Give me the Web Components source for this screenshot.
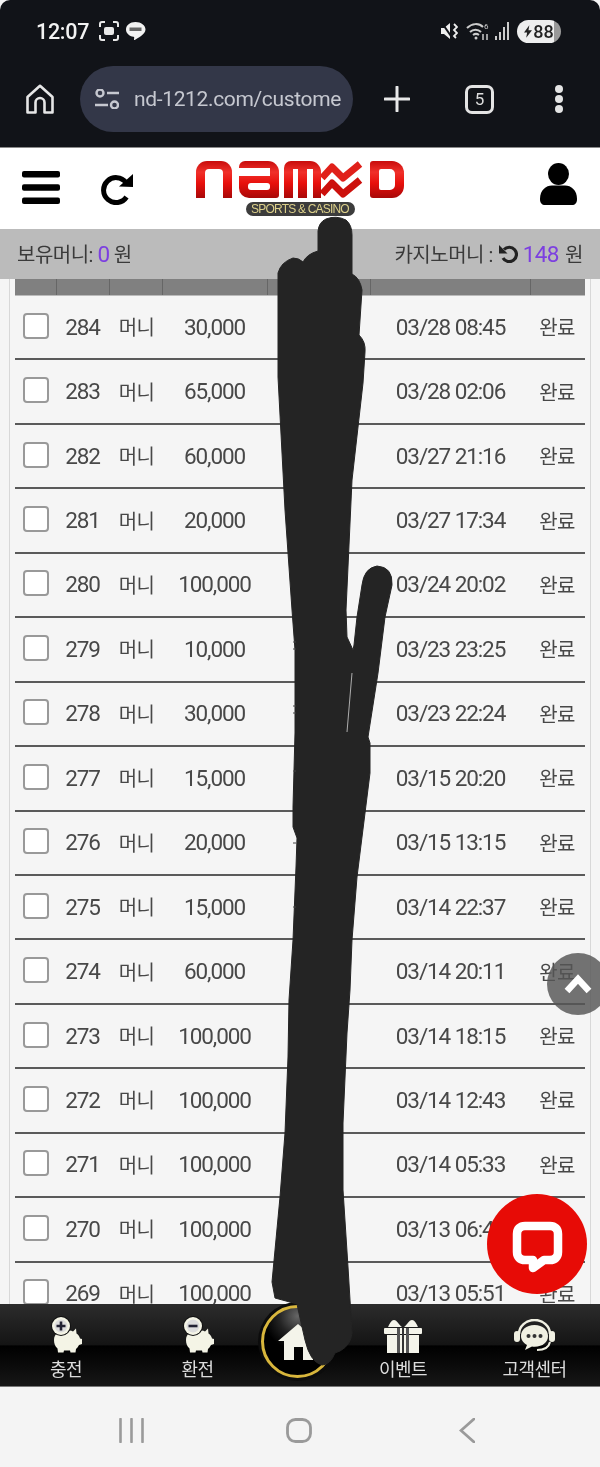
<!DOCTYPE html>
<html lang="ko">
<head>
<meta charset="utf-8">
<title>nd-1212.com/customer</title>
<style>
  html, body { margin: 0; padding: 0; background: #f4f4f4; }
  body {
    position: relative;
    width: 600px;
    height: 1467px;
    overflow: hidden;
    display: flex;
    flex-direction: column;
    font-family: Roboto, "Noto Sans CJK KR", sans-serif;
  }
  body > * { filter: blur(.4px); }
  history-list { flex: 1; min-height: 0; }
</style>
</head>
<body>
<browser-bar></browser-bar>
<site-header></site-header>
<money-bar></money-bar>
<history-list>
  <history-row no="284" amount="30,000" date="03/28 08:45"></history-row>
  <history-row no="283" amount="65,000" date="03/28 02:06"></history-row>
  <history-row no="282" amount="60,000" date="03/27 21:16"></history-row>
  <history-row no="281" amount="20,000" date="03/27 17:34"></history-row>
  <history-row no="280" amount="100,000" date="03/24 20:02"></history-row>
  <history-row no="279" amount="10,000" date="03/23 23:25"></history-row>
  <history-row no="278" amount="30,000" date="03/23 22:24"></history-row>
  <history-row no="277" amount="15,000" date="03/15 20:20"></history-row>
  <history-row no="276" amount="20,000" date="03/15 13:15"></history-row>
  <history-row no="275" amount="15,000" date="03/14 22:37"></history-row>
  <history-row no="274" amount="60,000" date="03/14 20:11"></history-row>
  <history-row no="273" amount="100,000" date="03/14 18:15"></history-row>
  <history-row no="272" amount="100,000" date="03/14 12:43"></history-row>
  <history-row no="271" amount="100,000" date="03/14 05:33"></history-row>
  <history-row no="270" amount="100,000" date="03/13 06:45"></history-row>
  <history-row no="269" amount="100,000" date="03/13 05:51"></history-row>
</history-list>
<bottom-nav></bottom-nav>
<system-nav></system-nav>
<float-buttons></float-buttons>
<ink-overlay></ink-overlay>

<script>
class BrowserBar extends HTMLElement {
    constructor() {
        super();
        this.attachShadow({ mode: 'open' });
        this.shadowRoot.innerHTML = `
        <style>
        :host {
          display: block;
          height: 147px;
          background: #111318;
          border-bottom: 1px solid #8a8a8a;
          border-radius: 10px 10px 0 0;
          color: #eee;
          font-family: Roboto, sans-serif;
        }
        .status {
          height: 66px;
          display: flex;
          align-items: center;
          padding: 0 39px 4px 36px;
          box-sizing: border-box;
        }
        .time { font-size: 21.5px; font-weight: 500; letter-spacing: -.3px; color: #f2f2f2; margin-right: 10px; }
        .status svg { display: block; }
        .spacer { flex: 1; }
        .battery {
          width: 44px;
          height: 23px;
          border-radius: 12px;
          background: linear-gradient(90deg, #eee 85%, #999 85%);
          color: #222;
          font-size: 18px;
          font-weight: 500;
          display: flex;
          align-items: center;
          justify-content: center;
          gap: 1px;
          margin-left: 6px;
        }
        .tools {
          height: 66px;
          display: flex;
          align-items: center;
          position: relative;
        }
        .home { margin-left: 26px; width: 28px; height: 30px; }
        .pill {
          margin-left: 26px;
          width: 273px;
          height: 66px;
          border-radius: 33px;
          background: #333748;
          display: flex;
          align-items: center;
          box-sizing: border-box;
          padding-left: 15px;
          color: #c6c8d0;
          font-size: 21px;
          white-space: nowrap;
          overflow: hidden;
        }
        .pill svg { flex: none; }
        .pill span { margin-left: 15px; letter-spacing: -.35px; }
        .plus { margin-left: 31px; }
        .tabs {
          margin-left: 55px;
          width: 23px;
          height: 23px;
          border: 3px solid #e4e4e4;
          border-radius: 7px;
          display: flex;
          align-items: center;
          justify-content: center;
          font-size: 17px;
          color: #ddd;
        }
        .more { margin-left: 60px; }
        </style>
        <div class="status">
          <span class="time">12:07</span>
          <svg width="20" height="20" viewBox="0 0 20 20" fill="none" stroke="#e8e8e8" stroke-width="2">
            <path d="M1 6V3a2 2 0 0 1 2-2h3M14 1h3a2 2 0 0 1 2 2v3M19 14v3a2 2 0 0 1-2 2h-3M6 19H3a2 2 0 0 1-2-2v-3"/>
            <rect x="5" y="6" width="10" height="8" rx="2" fill="#e8e8e8" stroke="none"/>
          </svg>
          <svg width="21" height="20" viewBox="0 0 21 20" style="margin-left:6px">
            <path d="M10.5 1C5 1 1 4.3 1 8.5c0 3.800 3.300 6.700 7.500 7.300.6.100.8.400.7 1l-.2 1.700c0 .5.300.7.800.4 2.500-1.400 10.700-5.700 10.700-10.400C20.500 4.300 16 1 10.500 1z" fill="#f2f2f2"/>
            <rect x="4.500" y="6.500" width="12" height="3.500" fill="#666"/>
          </svg>
          <span class="spacer"></span>
          <svg width="17" height="20" viewBox="0 0 17 20" fill="#eee">
            <path d="M0 7h3l6-5v16l-6-5H0z"/>
            <path d="M1 2l11 16" stroke="#111318" stroke-width="2"/>
            <path d="M13 3l3 3-3 3 3 3-3 3 2 2" fill="none" stroke="#eee" stroke-width="1.800"/>
          </svg>
          <svg width="24" height="22" viewBox="0 0 24 22" fill="none" stroke="#ccc" stroke-width="2" style="margin-left:8px">
            <path d="M1 8c5-5 12-5 16-1M4 12c3-3 8-3 11 0M7 15c2-1.500 4-1.500 6 0"/>
            <circle cx="10" cy="18" r="1.500" fill="#ccc" stroke="none"/>
            <path d="M17 14v6M21 20v-6" stroke-width="1.500"/>
            <text x="18" y="9" font-size="8" fill="#ccc" stroke="none" font-family="Roboto, sans-serif">6</text>
          </svg>
          <svg width="16" height="20" viewBox="0 0 16 20" fill="#ccc" style="margin-left:5px">
            <rect x="0" y="15" width="2" height="4"/><rect x="4" y="11" width="2" height="8"/><rect x="8" y="6" width="2" height="13"/><rect x="12" y="1" width="2" height="18"/>
          </svg>
          <span class="battery">
            <svg width="8" height="13" viewBox="0 0 9 14" fill="#222"><path d="M6 0L0 8h3.500L2.500 14 9 5.500H5z"/></svg>88
          </span>
        </div>
        <div class="tools">
          <svg class="home" viewBox="0 0 28 30" fill="none" stroke="#e6e6e6" stroke-width="2.600" stroke-linejoin="round">
            <path d="M1.500 13L14 1.800 26.500 13v15.500H18.500V18.500a4.500 4.500 0 0 0-9 0V28.500H1.500z"/>
          </svg>
          <div class="pill">
            <svg width="24" height="20" viewBox="0 0 24 20" fill="none" stroke="#c6c8d0" stroke-width="2.400">
              <circle cx="5" cy="4" r="3.500"/><path d="M12 4h12M0 16h13"/><circle cx="19.500" cy="16" r="3.500"/>
            </svg>
            <span>nd-1212.com/custome</span>
          </div>
          <svg class="plus" width="26" height="26" viewBox="0 0 26 26" stroke="#e8e8e8" stroke-width="3" stroke-linecap="round"><path d="M13 1v24M1 13h24"/></svg>
          <div class="tabs">5</div>
          <svg class="more" width="10" height="30" viewBox="0 0 10 30" fill="#e4e4e4"><circle cx="5" cy="5" r="4"/><circle cx="5" cy="15" r="4"/><circle cx="5" cy="25" r="4"/></svg>
        </div>
        `;
    }
}

class SiteHeader extends HTMLElement {
    constructor() {
        super();
        this.attachShadow({ mode: 'open' });
        this.shadowRoot.innerHTML = `
        <style>
        :host {
          display: block;
          height: 81px;
          background: #fff;
          position: relative;
        }
        .row {
          height: 100%;
          display: flex;
          align-items: flex-start;
        }
        .burger { margin: 23px 0 0 22px; }
        .reload { margin: 25px 0 0 40px; }
        .logo { margin: 13px 0 0 62px; width: 208px; display: flex; flex-direction: column; align-items: center; }
        .user { margin: 15px 0 0 136px; }
        .word { display: flex; height: 37px; width: 208px; }
        .red { background: linear-gradient(180deg, #c80c0c 0%, #f0302a 30%, #e8100c 60%, #a80808 100%); position: relative; flex: none; }
        .red i { position: absolute; background: #fff; display: block; }
        .n { width: 36px; height: 37px; border-radius: 11px 11px 0 0; }
        .n i { left: 9px; right: 9px; top: 8px; bottom: 0; border-radius: 4px 4px 0 0; }
        .a { width: 40px; height: 37px; margin-left: 7px; border-radius: 6px 11px 3px 10px; }
        .a .gap { left: 0; right: 9px; top: 7px; height: 8px; }
        .a .hole { left: 9px; right: 9px; top: 22px; height: 7px; border-radius: 3px; }
        .m { width: 37px; height: 37px; margin-left: 5px; border-radius: 7px 11px 0 0; }
        .m .l { left: 8.500px; width: 5.500px; top: 8px; bottom: 0; }
        .m .r { right: 8.500px; width: 5.500px; top: 8px; bottom: 0; }
        .zig { width: 42px; height: 37px; display: block; flex: none; }
        .d { width: 34px; height: 37px; margin-left: 7px; border-radius: 3px 12px 12px 3px; }
        .d i { left: 9px; right: 9px; top: 8px; bottom: 8px; border-radius: 2px 5px 5px 2px; }
        .badge {
          margin-top: 4px;
          height: 14px;
          width: 109px;
          border-radius: 7px;
          background: #3c3c3c;
          color: #dcd08a;
          font: 12px/14px "Liberation Sans", sans-serif;
          letter-spacing: -.8px;
          text-align: center;
          white-space: nowrap;
        }
        </style>
        <div class="row">
          <svg class="burger" width="38" height="33" viewBox="0 0 38 33" fill="#000">
            <rect width="38" height="6.500" rx="2"/><rect y="13.300" width="38" height="6.500" rx="2"/><rect y="26.500" width="38" height="6.500" rx="2"/>
          </svg>
          <svg class="reload" width="34" height="32" viewBox="0 0 34 32" fill="none">
            <path d="M26 9.500A12.500 12.500 0 1 0 26.500 24" stroke="#000" stroke-width="5"/>
            <path d="M19 13.500L33 14 33 1z" fill="#000"/>
          </svg>
          <div class="logo">
            <div class="word" role="img" aria-label="NAMED">
              <div class="red n"><i></i></div>
              <div class="red a"><i class="gap"></i><i class="hole"></i></div>
              <div class="red m"><i class="l"></i><i class="r"></i></div>
              <svg class="zig" viewBox="0 0 42 37" fill="none" stroke-width="7" stroke-linejoin="round">
                <path d="M1 17L11 6l11 11L39 3" stroke="#e0201a"/>
                <path d="M1 33l10-11 11 11 17-14" stroke="#cc100c"/>
              </svg>
              <div class="red d"><i></i></div>
            </div>
            <div class="badge">SPORTS &amp; CASINO</div>
          </div>
          <svg class="user" width="37" height="42" viewBox="0 0 37 42" fill="#000">
            <ellipse cx="18.500" cy="11" rx="10.500" ry="11"/>
            <path d="M0 36c0-9 6-13.500 12-13.500h13C31 22.500 37 27 37 36c0 4-2 6-5 6H5c-3 0-5-2-5-6z"/>
          </svg>
        </div>
        `;
    }
}

class MoneyBar extends HTMLElement {
    constructor() {
        super();
        this.attachShadow({ mode: 'open' });
        this.shadowRoot.innerHTML = `
        <style>
        :host {
          display: flex;
          align-items: center;
          justify-content: space-between;
          height: 50px;
          padding: 0 17px 2px;
          box-sizing: border-box;
          background: #bbb;
          color: #3a3a3a;
          font: 20px Roboto, "Noto Sans CJK KR", sans-serif;
          letter-spacing: -.5px;
        }
        b { font-weight: 400; color: #7c3fe0; font-size: 22.500px; letter-spacing: -.7px; }
        .right { display: flex; align-items: center; gap: 5px; }
        .right b { margin: 0 2px 0 0; }
        svg { display: block; }
        </style>
        <div>보유머니: <b>0</b> 원</div>
        <div class="right">
          <span>카지노머니 :</span>
          <svg width="20" height="19" viewBox="0 0 20 19" fill="none">
            <path d="M6 5.500A7.200 7.200 0 1 1 5 14" stroke="#222" stroke-width="3.200"/>
            <path d="M1 1v8.500h8.500z" fill="#222"/>
          </svg>
          <span><b>148</b> 원</span>
        </div>
        `;
    }
}

class HistoryList extends HTMLElement {
    constructor() {
        super();
        this.attachShadow({ mode: 'open' });
        this.shadowRoot.innerHTML = `
        <style>
        :host {
          display: block;
          overflow: hidden;
          background: #f5f5f5;
        }
        .box {
          margin: 0 9px;
          padding: 0 5px;
          border-left: 1px solid #d8d8d8;
          border-right: 1px solid #d8d8d8;
          min-height: 100%;
        }
        .head {
          height: 16px;
          display: grid;
          grid-template-columns: 42px 53px 53px 105px 103px 160px 1fr;
          background: #808080;
          border-bottom: 1px solid #bbb;
        }
        .head i { border-right: 1px solid #666; }
        .head i:last-child { border: 0; }
        </style>
        <div class="box">
          <div class="head"><i></i><i></i><i></i><i></i><i></i><i></i><i></i></div>
          <slot></slot>
        </div>
        `;
    }
}

class HistoryRow extends HTMLElement {
    constructor() {
        super();
        this.attachShadow({ mode: 'open' });
    }

    connectedCallback() {
        this.shadowRoot.innerHTML = `
        <style>
        :host {
          display: grid;
          grid-template-columns: 42px 53px 53px 105px 103px 160px 1fr;
          align-items: center;
          justify-items: center;
          height: 64.450px;
          box-sizing: border-box;
          border-bottom: 2px solid #5a5a5a;
          padding-bottom: 3px;
          color: #484848;
          font: 22.500px Roboto, "Noto Sans CJK KR", sans-serif;
          letter-spacing: -1.100px;
        }
        .check {
          width: 26px;
          height: 26px;
          box-sizing: border-box;
          background: #fff;
          border: 2px solid #999;
          border-radius: 4px;
        }
        .num, .date, .ko { padding-top: 2px; }
        .num { margin-right: 2px; }
        .date { margin-right: 1px; }
        .ko { font-size: 20px; letter-spacing: -.6px; }
        .done { margin-right: 2px; }
        </style>
        <div class="check"></div>
        <div class="num">${this.getAttribute('no')}</div>
        <div class="ko">머니</div>
        <div class="num">${this.getAttribute('amount')}</div>
        <div></div>
        <div class="date">${this.getAttribute('date')}</div>
        <div class="ko done">완료</div>
        `;
    }
}

class NavItem extends HTMLElement {
    constructor() {
        super();
        this.attachShadow({ mode: 'open' });
        this.shadowRoot.innerHTML = `
        <style>
        :host {
          display: flex;
          flex-direction: column;
          align-items: center;
          color: #ddd;
          font: 18px "Noto Sans CJK KR", sans-serif;
          letter-spacing: -.6px;
          padding-top: 13px;
        }
        .icon { height: 36px; display: flex; align-items: flex-end; }
        .label { line-height: 24px; margin-top: 3px; white-space: nowrap; }
        </style>
        <div class="icon"><slot name="icon"></slot></div>
        <div class="label"><slot></slot></div>
        `;
    }
}

class BottomNav extends HTMLElement {
    constructor() {
        super();
        this.attachShadow({ mode: 'open' });
        const pig = (mark) => `
          <svg slot="icon" width="32" height="37" viewBox="0 0 32 37" fill="#f4f4e6">
            <path d="M4 24c0-6 5-10 12-10 3 0 5 .5 7 1.500l3-3 .5 5c2 1 3 3 3.500 5l2 .5v5l-3 1c-1 2-2 3-3 4l-.5 3.500h-5l-.5-2h-6l-.5 2H8l-.5-4C5 30.500 4 27.500 4 24z"/>
            <circle cx="11" cy="10" r="10" fill="#111"/>
            <circle cx="11" cy="10" r="9"/>
            <circle cx="11" cy="10" r="6.500" fill="#ddd"/>
            <path d="${mark}" stroke="#223" stroke-width="2.600" fill="none"/>
          </svg>`;
        this.shadowRoot.innerHTML = `
        <style>
        :host {
          display: grid;
          grid-template-columns: 132px 131px 70px 140px 123px;
          height: 83px;
          box-sizing: border-box;
          background: linear-gradient(180deg, #2c2c2c 0, #141414 50%, #000 51%, #161616 100%);
          border-bottom: 1px solid #777;
          position: relative;
        }
        .ring {
          position: absolute;
          left: 261px;
          top: 1px;
          width: 73px;
          height: 73px;
          border-radius: 50%;
          box-sizing: border-box;
          background: radial-gradient(circle at 50% 12%, #666 0, #222 28%, #000 50%);
          border: 3.500px solid #d8b63c;
          box-shadow: 0 0 0 3px #0c0c0c;
          display: flex;
          align-items: center;
          justify-content: center;
        }
        </style>
        <nav-item>${pig('M6.500 10h9M11 5.500v9')}충전</nav-item>
        <nav-item>${pig('M6.500 10h9')}환전</nav-item>
        <span></span>
        <nav-item>
          <svg slot="icon" width="38" height="34" viewBox="0 0 38 34" fill="#f4f4ea">
            <rect x="0" y="9" width="38" height="6" rx="1"/>
            <rect x="3" y="16" width="32" height="18"/>
            <rect x="13" y="9" width="3" height="25" fill="#555"/>
            <rect x="22" y="9" width="3" height="25" fill="#555"/>
            <rect x="18" y="9" width="2" height="25" fill="#333"/>
            <path d="M18 8C15 6 13 1 10 1S5 6 4 8zM20 8c3-2 5-7 8-7s5 5 6 7z"/>
          </svg>
          이벤트
        </nav-item>
        <nav-item>
          <svg slot="icon" width="41" height="34" viewBox="0 0 41 34" fill="none">
            <path d="M5 15a15.500 14 0 0 1 31 0" stroke="#f0f0e2" stroke-width="2.500"/>
            <rect x="0" y="12" width="6" height="11" rx="3" fill="#f0f0e2"/>
            <rect x="35" y="12" width="6" height="11" rx="3" fill="#f0f0e2"/>
            <path d="M20.500 6C12 6 7 11 7 17c0 4 3 7.500 6 9l-2 5 7-3.500c1 .2 1.500.2 2.500.2C29 27.700 34 23 34 17S29 6 20.500 6z" fill="#f0f0e2"/>
            <circle cx="14.500" cy="17" r="2" fill="#333"/><circle cx="20.500" cy="17" r="2" fill="#333"/><circle cx="26.500" cy="17" r="2" fill="#333"/>
            <path d="M36 23c-1 5-6 8-13 8" stroke="#f0f0e2" stroke-width="2"/>
          </svg>
          고객센터
        </nav-item>
        <div class="ring">
          <svg width="40" height="36" viewBox="0 0 40 36" fill="#f4f4ea">
            <path d="M20 0L40 17h-5v19H25V23h-9v13H6V17H0z"/>
          </svg>
        </div>
        `;
    }
}

class SystemNav extends HTMLElement {
    constructor() {
        super();
        this.attachShadow({ mode: 'open' });
        this.shadowRoot.innerHTML = `
        <style>
        :host {
          display: grid;
          grid-template-columns: 119px 25px 142px 26px 147px 16px;
          height: 80px;
          padding-top: 31px;
          box-sizing: border-box;
          background: #f4f4f4;
        }
        svg { display: block; }
        svg:first-of-type { grid-column: 2; }
        svg:nth-of-type(2) { grid-column: 4; }
        svg:nth-of-type(3) { grid-column: 6; }
        </style>
        <svg width="25" height="25" viewBox="0 0 25 25" stroke="#9a9a9a" stroke-width="2.600" stroke-linecap="round"><path d="M1.500 1v23M12.500 1v23M23.500 1v23"/></svg>
        <svg width="26" height="25" viewBox="0 0 26 25" fill="none" stroke="#9a9a9a" stroke-width="2.800"><rect x="1.500" y="1.500" width="23" height="22" rx="8"/></svg>
        <svg width="16" height="25" viewBox="0 0 16 25" fill="none" stroke="#9a9a9a" stroke-width="2.800" stroke-linecap="round"><path d="M15 1L2 12.500 15 24"/></svg>
        `;
    }
}

class FloatButtons extends HTMLElement {
    constructor() {
        super();
        this.attachShadow({ mode: 'open' });
        this.shadowRoot.innerHTML = `
        <style>
        :host { display: contents; }
        .up {
          position: absolute;
          left: 547px;
          top: 953px;
          width: 62px;
          height: 62px;
          border-radius: 50%;
          background: rgba(85, 85, 85, .82);
        }
        .chat {
          position: absolute;
          left: 487px;
          top: 1194px;
          width: 100px;
          height: 100px;
          border-radius: 50%;
          background: #e70b06;
        }
        svg { position: absolute; left: 0; top: 0; }
        </style>
        <div class="up">
          <svg width="62" height="62" viewBox="0 0 62 62" fill="none" stroke="#fff" stroke-width="6.500"><path d="M20 38l11-12 11 12"/></svg>
        </div>
        <div class="chat">
          <svg width="100" height="100" viewBox="0 0 100 100">
            <path d="M38 32h25c5 0 8 3 8 8v18c0 5-3 8-8 8H57l-11 8 0-8h-8c-5 0-8-3-8-8V40c0-5 3-8 8-8z" fill="none" stroke="#fff" stroke-width="8.500" stroke-linejoin="round"/>
          </svg>
        </div>
        `;
    }
}

class InkOverlay extends HTMLElement {
    constructor() {
        super();
        this.attachShadow({ mode: 'open' });
        this.shadowRoot.innerHTML = `
        <style>
        :host { position: absolute; left: 0; top: 0; width: 600px; height: 1467px; pointer-events: none; }
        svg { display: block; }
        </style>
        <svg width="600" height="1467" viewBox="0 0 600 1467">
          <path fill="#242424" stroke="#242424" stroke-width="1" stroke-linejoin="round" d="M318 251 L318 231 Q319 222 326 219 Q336 215 346 220 Q352 225 352 235 L352 274 Q360 278 362 290 L359 335 Q366 342 365 352 L363 383 L352 480 L346 610 L347 637 L353 650 L354 645 L357 617 L362 585 Q364 568 377 566 Q393 567 392 585 L385 617 L378 673 L368 737 L370 743 L370 773 L365 813 L357 877 L352 940 L350 990 L347 1033 L343 1123 L343 1190 L348 1267 L352 1333 Q351 1345 340 1351 L335 1353 Q330 1365 322 1365 Q310 1362 305 1340 L300 1318 L297 1304 L275 1298 L272 1282 L280 1197 L285 1133 L288 1057 L289 1000 L293 940 L296 867 L297 838 L293 827 L293 807 L295 733 L295 650 L292 610 L285 510 L278 377 L278 273 Q281 262 293 258 Q299 258 303 262 Q307 254 318 251 Z"/>
          <path d="M352 673 L347 732" stroke="#d0d0d0" stroke-width=".8" fill="none"/>
          <path d="M293 642h3M293 649h3M293 706h3M293 713h3M293 771h3M293 843h3M293 907h3" stroke="#444" stroke-width="1" fill="none"/>
        </svg>
        `;
    }
}

customElements.define('browser-bar', BrowserBar);
customElements.define('site-header', SiteHeader);
customElements.define('money-bar', MoneyBar);
customElements.define('history-list', HistoryList);
customElements.define('history-row', HistoryRow);
customElements.define('nav-item', NavItem);
customElements.define('bottom-nav', BottomNav);
customElements.define('system-nav', SystemNav);
customElements.define('float-buttons', FloatButtons);
customElements.define('ink-overlay', InkOverlay);
</script>
</body>
</html>
